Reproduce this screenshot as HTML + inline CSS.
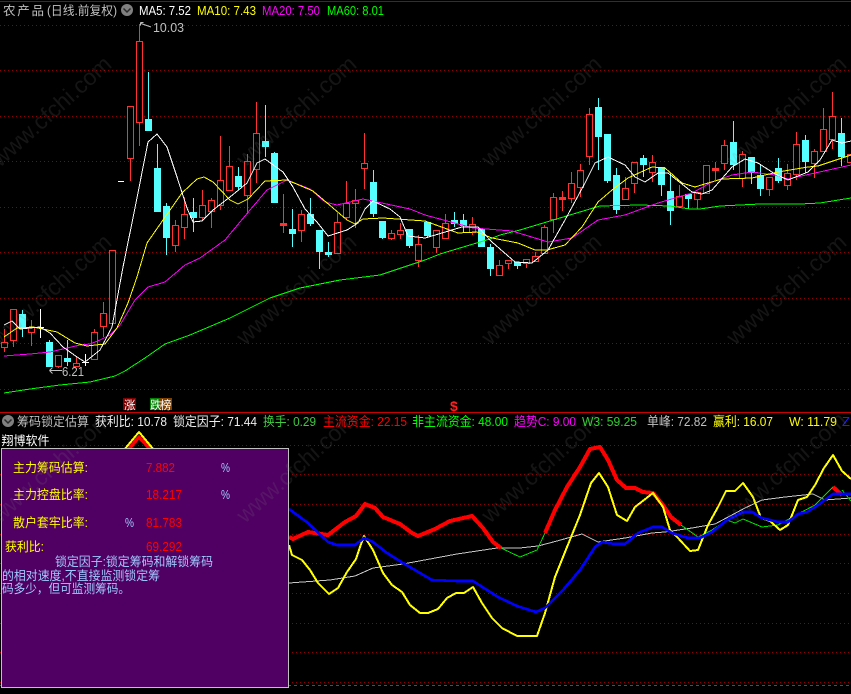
<!DOCTYPE html>
<html>
<head>
<meta charset="utf-8">
<style>
html,body{margin:0;padding:0;background:#000;width:851px;height:694px;overflow:hidden}
svg{display:block}
text{font-family:"Liberation Sans","WenQuanYi Zen Hei","Noto Sans CJK SC",sans-serif;font-size:13px;white-space:pre}
.cj{font-size:12.5px}
</style>
</head>
<body>
<svg width="851" height="694" viewBox="0 0 851 694" xmlns="http://www.w3.org/2000/svg">
<rect width="851" height="694" fill="#000"/>
<!-- frame lines -->
<path d="M0 1.5H851" stroke="#a00000" shape-rendering="crispEdges"/>
<path d="M0 412.5H851" stroke="#c80000" shape-rendering="crispEdges"/>
<!-- grid -->
<g stroke="#900000" stroke-dasharray="1 3" shape-rendering="crispEdges" fill="none">
<path d="M0 25.5H851M0 70.5H851M0 116.5H851M0 161.5H851M0 207.5H851M0 252.5H851M0 298.5H851M0 343.5H851M0 389.5H851"/>
<path d="M50 445.5H851M0 474.5H851M0 504.5H851M0 534.5H851M0 563.5H851M0 593.5H851M0 623.5H851M0 652.5H851M0 682.5H851"/>
</g>
<path d="M0 685.5H851" stroke="#c000c0" stroke-dasharray="3 3" shape-rendering="crispEdges"/>

<!-- candles -->
<g shape-rendering="crispEdges">
<path stroke="#ff3232" fill="none" d="M4.5 329V352M13.5 309V347M31.5 320V346M58.5 355V368M76.5 357V366M94.5 329V359M103.5 302V337M112.5 250V323M130.5 106V181M139.5 24V146M175.5 220V252M184.5 197V239M202.5 190V220M211.5 198V228M220.5 136V210M229.5 146V190M247.5 154V214M256.5 102V183M283.5 194V233M301.5 210V242M337.5 213V253M346.5 181V220M355.5 189V228M364.5 133V189M391.5 230V240M400.5 223V239M418.5 235V267M436.5 230V253M445.5 214V238M472.5 217V235M499.5 260V276M508.5 260V269M526.5 259V268M535.5 252V261M544.5 225V253M553.5 193V233M562.5 191V211M571.5 172V203M580.5 164V197M589.5 108V165M625.5 177V199M634.5 162V193M652.5 155V182M679.5 185V206M697.5 192V209M706.5 165V193M715.5 162V180M724.5 140V170M742.5 151V187M769.5 177V196M787.5 164V190M796.5 132V180M814.5 149V178M823.5 108V151M832.5 92V149"/>
<path stroke="#ff3232" fill="#000" d="M1.5 342.5h6v5h-6zM10.5 309.5h6v31h-6zM28.5 327.5h6v5h-6zM55.5 355.5h6v11h-6zM73.5 363.5h6v3h-6zM91.5 332.5h6v27h-6zM100.5 313.5h6v13h-6zM109.5 250.5h6v73h-6zM127.5 106.5h6v52h-6zM136.5 41.5h6v81h-6zM172.5 225.5h6v20h-6zM181.5 214.5h6v13h-6zM199.5 205.5h6v12h-6zM208.5 200.5h6v11h-6zM217.5 180.5h6v25h-6zM226.5 166.5h6v24h-6zM244.5 161.5h6v34h-6zM253.5 133.5h6v36h-6zM298.5 214.5h6v16h-6zM334.5 222.5h6v31h-6zM343.5 203.5h6v14h-6zM352.5 200.5h6v3h-6zM361.5 163.5h6v5h-6zM388.5 233.5h6v5h-6zM397.5 230.5h6v4h-6zM415.5 244.5h6v16h-6zM433.5 230.5h6v17h-6zM442.5 223.5h6v15h-6zM469.5 224.5h6v8h-6zM496.5 265.5h6v10h-6zM505.5 260.5h6v3h-6zM523.5 259.5h6v4h-6zM532.5 256.5h6v5h-6zM541.5 227.5h6v26h-6zM550.5 197.5h6v22h-6zM568.5 183.5h6v15h-6zM577.5 170.5h6v17h-6zM586.5 114.5h6v42h-6zM622.5 188.5h6v11h-6zM631.5 162.5h6v21h-6zM649.5 162.5h6v10h-6zM676.5 196.5h6v10h-6zM694.5 192.5h6v7h-6zM703.5 165.5h6v28h-6zM721.5 145.5h6v18h-6zM739.5 154.5h6v24h-6zM766.5 177.5h6v12h-6zM784.5 173.5h6v12h-6zM793.5 144.5h6v30h-6zM811.5 151.5h6v12h-6zM820.5 129.5h6v22h-6zM829.5 116.5h6v23h-6zM847.5 154.5h6v8h-6z"/>
<path fill="#ff3232" d="M280 223h7v3h-7zM559 197h7v3h-7zM712 168h7v3h-7z"/>
<path stroke="#55ffff" fill="none" d="M22.5 310V337M49.5 340V367M67.5 340V366M148.5 72V131M157.5 144V212M166.5 203V255M193.5 198V232M238.5 167V190M265.5 105V157M274.5 152V203M292.5 209V247M310.5 198V226M319.5 230V269M328.5 242V257M373.5 170V217M382.5 221V239M409.5 229V248M427.5 222V238M454.5 212V227M463.5 214V232M481.5 229V247M490.5 244V276M517.5 262V269M598.5 98V170M607.5 134V183M616.5 168V214M643.5 155V177M661.5 167V196M670.5 173V225M688.5 194V209M733.5 121V170M751.5 157V184M760.5 165V196M778.5 158V183M805.5 135V173M841.5 118V166"/>
<path fill="#55ffff" d="M19 314h7v15h-7zM46 342h7v25h-7zM64 358h7v4h-7zM145 119h7v12h-7zM154 168h7v44h-7zM163 206h7v32h-7zM190 212h7v6h-7zM235 176h7v11h-7zM262 141h7v6h-7zM271 153h7v50h-7zM289 229h7v5h-7zM307 214h7v10h-7zM316 230h7v22h-7zM325 252h7v3h-7zM370 182h7v32h-7zM379 221h7v17h-7zM406 229h7v17h-7zM424 222h7v14h-7zM451 220h7v4h-7zM460 220h7v6h-7zM478 229h7v18h-7zM487 247h7v22h-7zM514 262h7v4h-7zM595 107h7v30h-7zM604 134h7v47h-7zM613 175h7v35h-7zM640 158h7v7h-7zM658 167h7v18h-7zM667 191h7v20h-7zM685 194h7v5h-7zM730 142h7v23h-7zM748 157h7v16h-7zM757 175h7v14h-7zM775 168h7v13h-7zM802 140h7v22h-7zM838 133h7v24h-7z"/>
<path stroke="#fff" fill="none" d="M40.5 309V338M37 327.5h7M85.5 354V366M82 362.5h7M118 181.5h6"/>
</g>

<!-- moving averages -->
<g fill="none" shape-rendering="crispEdges" stroke-width="1">
<polyline stroke="#00ff00" points="4,393 30,389 60,385 90,382 115,376 125,371 145,358 165,344 190,335 230,318 270,298 300,288 340,280 380,275 425,260 440,254 470,245 490,239 500,235 520,230 560,218 600,206 640,205 670,206 690,209 700,209 720,206 760,204 800,204 820,203 851,198"/>
<polyline stroke="#ff00ff" points="4,356 30,354 50,352 80,345 90,344 100,340 110,335 120,325 135,300 148,287 165,282 185,265 200,258 225,240 250,210 267,190 287,180 310,189 325,202 337,205 363,199 410,209 425,215 473,228 512,231 548,242 572,238 598,220 625,215 658,203 692,193 712,182 732,175 752,172 775,175 788,179 815,173 851,165"/>
<polyline stroke="#ffff00" points="4,337 17,328 33,327 57,332 75,343 87,346 105,344 117,328 128,303 137,277 147,243 163,220 182,193 197,179 204,177 213,182 230,200 238,204 248,199 265,181 287,180 313,191 333,208 347,220 355,224 363,219 383,218 425,221 458,233 477,232 492,238 518,243 535,250 547,250 565,245 582,227 598,202 612,190 628,178 652,167 665,168 682,183 695,187 708,183 722,179 752,178 778,172 808,167 818,166 851,155"/>
<polyline stroke="#ffffff" points="4,325 12,321 20,329 40,327 50,333 63,347 77,357 85,362 100,350 112,327 123,267 135,208 148,142 157,134 167,147 177,177 187,208 193,222 202,221 213,210 230,197 247,183 257,163 265,159 283,172 293,187 305,209 317,222 328,236 347,230 358,223 365,209 373,201 390,209 400,217 408,236 425,238 442,233 462,227 478,227 492,242 515,262 532,263 548,250 565,220 585,183 595,163 608,157 625,165 635,177 645,182 658,173 668,173 692,192 702,194 712,190 732,167 745,159 758,163 775,174 788,180 808,172 820,160 832,140 842,143 851,141"/>
</g>

<!-- top header -->
<circle cx="127" cy="10" r="6" fill="#808080"/>
<path d="M123.5 8.5L127 12L130.5 8.5" stroke="#2a2a2a" stroke-width="1.5" fill="none"/>
<text x="3" y="15" fill="#c0c0c0" textLength="41" lengthAdjust="spacing" class="cj">农 产 品</text>
<text x="47" y="15" fill="#c0c0c0" textLength="70" lengthAdjust="spacingAndGlyphs" class="cj">(日线.前复权)</text>
<text x="139" y="15" fill="#ffffff" textLength="52" lengthAdjust="spacingAndGlyphs">MA5: 7.52</text>
<text x="197" y="15" fill="#ffff00" textLength="59" lengthAdjust="spacingAndGlyphs">MA10: 7.43</text>
<text x="262" y="15" fill="#ff00ff" textLength="58" lengthAdjust="spacingAndGlyphs">MA20: 7.50</text>
<text x="327" y="15" fill="#00ff00" textLength="57" lengthAdjust="spacingAndGlyphs">MA60: 8.01</text>

<!-- price labels -->
<path d="M140.5 22.5h3M140.5 22.5v3M141 23.5L151 27" stroke="#c0c0c0" fill="none"/>
<text x="153" y="32" fill="#c0c0c0" textLength="31" lengthAdjust="spacingAndGlyphs">10.03</text>
<path d="M49.5 370.5H62M49.5 370.5l3 -3M49.5 370.5l3 3" stroke="#c0c0c0" fill="none"/>
<text x="62" y="376" fill="#c0c0c0" textLength="22" lengthAdjust="spacingAndGlyphs">6.21</text>

<!-- markers -->
<rect x="123" y="398" width="13" height="12" fill="#800000"/>
<text x="124" y="409" fill="#fff" style="font-size:11.5px">涨</text>
<rect x="150" y="398" width="13" height="12" fill="#008000"/>
<rect x="159" y="398" width="13" height="12" fill="#804000"/>
<text x="150" y="409" fill="#fff" style="font-size:11.5px">跌</text>
<text x="160" y="409" fill="#fff" style="font-size:11.5px">榜</text>
<text x="450" y="411" fill="#ff2020" style="font-size:14px;font-weight:bold">$</text>

<!-- lower panel lines -->
<g fill="none" shape-rendering="crispEdges" stroke-linejoin="round">
<polyline stroke="#c8c8c8" stroke-width="1" points="289,583 330,580 355,576 373,568 403,564 457,554 497,548 520,548 538,546 557,541 582,534 598,542 625,538 652,533 665,532 692,528 715,524 745,508 762,500 785,497 813,494 825,500 851,498"/>
<polyline stroke="#00e000" stroke-width="1" points="501,548 520,557 537,550 545,533"/>
<polyline stroke="#00e000" stroke-width="1" points="681,525 698,537 712,530 727,520 735,523 743,519 762,527 778,525 798,514 815,505 833,487"/>
<polyline stroke="#00e000" stroke-width="1" points="842,490 851,501"/>
<polyline stroke="#ff0000" stroke-width="4" points="289,537 293,539 308,532 328,535 345,522 356,516 365,504 375,508 383,517 400,524 412,533 418,536 435,529 450,521 472,516 483,528 493,542 501,548"/>
<polyline stroke="#ff0000" stroke-width="4" points="545,533 555,510 567,487 580,467 590,449 600,447 608,460 617,480 626,488 635,488 643,492 653,493 663,505 671,517 681,525"/>
<polyline stroke="#ff0000" stroke-width="4" points="833,487 842,495"/>
<polyline stroke="#ff0000" stroke-width="3.5" points="128,450 139,437 151,450"/>
<polyline stroke="#ffff00" stroke-width="2" points="124,450 139,432 154,450"/>
<polyline stroke="#ffff00" stroke-width="2" points="289,545 292,555 302,560 310,570 318,583 329,594 338,588 347,572 356,559 360,547 364,536 373,550 383,573 392,585 402,592 410,605 420,613 428,613 438,609 447,598 456,593 464,593 473,587 482,603 492,618 502,628 517,636 537,636 545,613 555,577 565,552 580,515 591,483 599,473 608,487 617,515 627,521 635,507 653,493 663,507 670,530 678,538 690,551 698,550 708,525 718,507 726,491 735,491 743,483 753,497 761,518 770,521 780,530 788,525 798,500 807,497 815,485 824,468 833,455 842,471 851,479"/>
<polyline stroke="#0000ff" stroke-width="2.6" points="289,509 308,523 328,542 337,545 355,545 364,538 373,542 387,553 403,563 420,573 432,580 457,581 473,581 498,597 517,606 536,612 545,608 563,590 580,570 595,547 602,542 615,544 625,544 638,533 653,527 662,527 672,533 688,538 700,538 712,532 727,520 743,512 752,512 762,518 778,522 788,522 798,514 807,512 818,505 833,494 851,494"/>
</g>

<!-- lower header -->
<circle cx="8" cy="421" r="6" fill="#808080"/>
<path d="M4.5 419.5L8 423L11.5 419.5" stroke="#2a2a2a" stroke-width="1.5" fill="none"/>
<text x="17" y="426" fill="#c0c0c0" textLength="72" lengthAdjust="spacingAndGlyphs" class="cj">筹码锁定估算</text>
<text x="95" y="426" fill="#eeeeee" textLength="72" lengthAdjust="spacingAndGlyphs">获利比: 10.78</text>
<text x="173" y="426" fill="#eeeeee" textLength="84" lengthAdjust="spacingAndGlyphs">锁定因子: 71.44</text>
<text x="263" y="426" fill="#40c840" textLength="53" lengthAdjust="spacingAndGlyphs">换手: 0.29</text>
<text x="323" y="426" fill="#ff0000" textLength="84" lengthAdjust="spacingAndGlyphs">主流资金: 22.15</text>
<text x="412" y="426" fill="#00ff00" textLength="96" lengthAdjust="spacingAndGlyphs">非主流资金: 48.00</text>
<text x="514" y="426" fill="#ff00ff" textLength="62" lengthAdjust="spacingAndGlyphs">趋势C: 9.00</text>
<text x="582" y="426" fill="#30d030" textLength="55" lengthAdjust="spacingAndGlyphs">W3: 59.25</text>
<text x="647" y="426" fill="#c0c0c0" textLength="60" lengthAdjust="spacingAndGlyphs">单峰: 72.82</text>
<text x="713" y="426" fill="#ffff00" textLength="60" lengthAdjust="spacingAndGlyphs">赢利: 16.07</text>
<text x="789" y="426" fill="#ffff00" textLength="48" lengthAdjust="spacingAndGlyphs">W: 11.79</text>
<text x="842" y="426" fill="#2020ff">Z:</text>
<text x="1.5" y="445" fill="#ffffff" textLength="48" lengthAdjust="spacingAndGlyphs" class="cj">翔博软件</text>

<!-- info panel -->
<rect x="1.5" y="448.5" width="287" height="239" fill="#4f0062" stroke="#c0c0c0" shape-rendering="crispEdges"/>
<g class="cj" style="font-size:12.5px">
<text x="13" y="472" fill="#ffff00" textLength="75" lengthAdjust="spacingAndGlyphs" class="cj">主力筹码估算:</text>
<text x="146" y="472" fill="#ff0000" textLength="29" lengthAdjust="spacingAndGlyphs">7.882</text>
<text x="221" y="472" fill="#a0c8ff" textLength="9" lengthAdjust="spacingAndGlyphs">%</text>
<text x="13" y="499" fill="#ffff00" textLength="75" lengthAdjust="spacingAndGlyphs" class="cj">主力控盘比率:</text>
<text x="146" y="499" fill="#ff0000" textLength="36" lengthAdjust="spacingAndGlyphs">18.217</text>
<text x="221" y="499" fill="#a0c8ff" textLength="9" lengthAdjust="spacingAndGlyphs">%</text>
<text x="13" y="527" fill="#ffff00" textLength="75" lengthAdjust="spacingAndGlyphs" class="cj">散户套牢比率:</text>
<text x="125" y="527" fill="#a0c8ff" textLength="9" lengthAdjust="spacingAndGlyphs">%</text>
<text x="146" y="527" fill="#ff0000" textLength="36" lengthAdjust="spacingAndGlyphs">81.783</text>
<text x="5" y="551" fill="#ffff00" textLength="39" lengthAdjust="spacingAndGlyphs" class="cj">获利比:</text>
<text x="146" y="551" fill="#ff0000" textLength="36" lengthAdjust="spacingAndGlyphs">69.292</text>
<text x="55" y="566" fill="#a0c8ff" textLength="158" lengthAdjust="spacingAndGlyphs" class="cj">锁定因子:锁定筹码和解锁筹码</text>
<text x="2" y="580" fill="#a0c8ff" textLength="158" lengthAdjust="spacingAndGlyphs" class="cj">的相对速度,不直接监测锁定筹</text>
<text x="2" y="593" fill="#a0c8ff" textLength="128" lengthAdjust="spacingAndGlyphs" class="cj">码多少，但可监测筹码。</text>
</g>

<!-- watermark -->
<g fill="#808080" fill-opacity="0.16">
<text style="font-size:23px" transform="translate(0 168) rotate(-42)">www.cfchi.com</text>
<text style="font-size:23px" transform="translate(245 168) rotate(-42)">www.cfchi.com</text>
<text style="font-size:23px" transform="translate(490 168) rotate(-42)">www.cfchi.com</text>
<text style="font-size:23px" transform="translate(735 168) rotate(-42)">www.cfchi.com</text>
<text style="font-size:23px" transform="translate(0 346) rotate(-42)">www.cfchi.com</text>
<text style="font-size:23px" transform="translate(245 346) rotate(-42)">www.cfchi.com</text>
<text style="font-size:23px" transform="translate(490 346) rotate(-42)">www.cfchi.com</text>
<text style="font-size:23px" transform="translate(735 346) rotate(-42)">www.cfchi.com</text>
<text style="font-size:23px" transform="translate(0 524) rotate(-42)">www.cfchi.com</text>
<text style="font-size:23px" transform="translate(245 524) rotate(-42)">www.cfchi.com</text>
<text style="font-size:23px" transform="translate(490 524) rotate(-42)">www.cfchi.com</text>
<text style="font-size:23px" transform="translate(735 524) rotate(-42)">www.cfchi.com</text>
</g>
</svg>
</body>
</html>
